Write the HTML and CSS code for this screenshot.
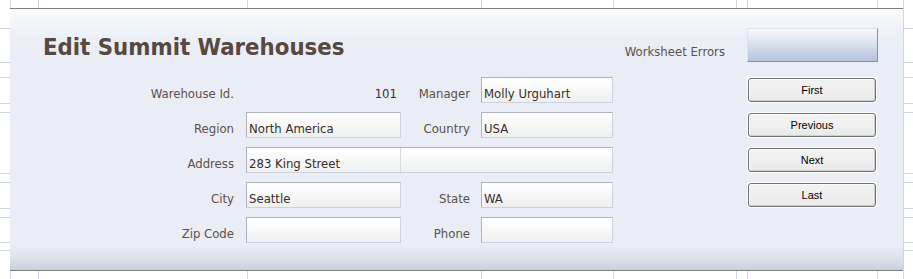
FILE: index.html
```html
<!DOCTYPE html>
<html lang="en">
<head>
<meta charset="utf-8">
<title>Edit Summit Warehouses</title>
<link rel="stylesheet" href="styles.css">
</head>
<body>
<div class="panel">
  <div class="header">
    <h1 class="title">Edit Summit Warehouses</h1>
    <span class="errors-label">Worksheet Errors</span>
    <div class="errors-box"></div>
  </div>
  <div class="form">
    <span class="label l1">Warehouse Id.</span>
    <span class="value-num">101</span>
    <span class="label l2">Manager</span>
    <div class="field">Molly Urguhart</div>
    <span class="gap"></span>
    <button class="btn"><span class="btn-face">First</span></button>

    <span class="label l1">Region</span>
    <div class="field">North America</div>
    <span class="label l2">Country</span>
    <div class="field">USA</div>
    <span class="gap"></span>
    <button class="btn"><span class="btn-face">Previous</span></button>

    <span class="label l1">Address</span>
    <div class="field field-wide"><span class="addr-a">283 King Street</span><span class="addr-b"></span></div>
    <span class="gap"></span>
    <button class="btn"><span class="btn-face">Next</span></button>

    <span class="label l1">City</span>
    <div class="field">Seattle</div>
    <span class="label l2">State</span>
    <div class="field">WA</div>
    <span class="gap"></span>
    <button class="btn"><span class="btn-face">Last</span></button>

    <span class="label l1">Zip Code</span>
    <div class="field"></div>
    <span class="label l2">Phone</span>
    <div class="field"></div>
  </div>
</div>
</body>
</html>
```
FILE: styles.css
```css
html, body {
  margin: 0;
  padding: 0;
}

body {
  width: 913px;
  height: 279px;
  overflow: hidden;
  background-color: #ffffff;
  background-repeat: no-repeat;
  background-image:
    linear-gradient(#cdd5e6, #cdd5e6), linear-gradient(#cdd5e6, #cdd5e6),
    linear-gradient(#cdd5e6, #cdd5e6), linear-gradient(#cdd5e6, #cdd5e6),
    linear-gradient(#cdd5e6, #cdd5e6), linear-gradient(#cdd5e6, #cdd5e6),
    linear-gradient(#cdd5e6, #cdd5e6), linear-gradient(#cdd5e6, #cdd5e6),
    linear-gradient(#cdd5e6, #cdd5e6),
    linear-gradient(#cdd5e6, #cdd5e6), linear-gradient(#cdd5e6, #cdd5e6),
    linear-gradient(#cdd5e6, #cdd5e6), linear-gradient(#cdd5e6, #cdd5e6),
    linear-gradient(#cdd5e6, #cdd5e6), linear-gradient(#cdd5e6, #cdd5e6),
    linear-gradient(#cdd5e6, #cdd5e6), linear-gradient(#cdd5e6, #cdd5e6),
    linear-gradient(#cdd5e6, #cdd5e6), linear-gradient(#cdd5e6, #cdd5e6),
    linear-gradient(#cdd5e6, #cdd5e6);
  background-size:
    1px 100%, 1px 100%, 1px 100%, 1px 100%, 1px 100%, 1px 100%, 1px 100%, 1px 100%, 1px 100%,
    100% 1px, 100% 1px, 100% 1px, 100% 1px, 100% 1px, 100% 1px, 100% 1px, 100% 1px, 100% 1px, 100% 1px, 100% 1px;
  background-position:
    10px 0, 38px 0, 247px 0, 481px 0, 613px 0, 736px 0, 747px 0, 877px 0, 903px 0,
    0 28px, 0 62px, 0 77px, 0 103px, 0 112px, 0 173px, 0 182px, 0 208px, 0 217px, 0 242px, 0 250px;
  font-family: "DejaVu Sans Condensed", "DejaVu Sans", sans-serif;
  font-stretch: condensed;
}

.panel {
  box-sizing: border-box;
  margin: 8px 0 0 10px;
  width: 893px;
  height: 263px;
  border-top: 1px solid #7d7d7d;
  border-bottom: 1px solid #7f7f7f;
  padding-top: 19px;
  background: linear-gradient(to bottom, #f9fafc 0, #edf0f6 26px, #eaedf5 40px, #eaedf5 236px, #dfe3ec 248px, #c9d0dd 100%);
}

/* header */
.header {
  display: flex;
  align-items: flex-start;
  height: 34px;
  margin-bottom: 15px;
  padding-right: 25px;
}

.title {
  flex: 1;
  margin: 0;
  padding: 5px 0 0 33px;
  font-size: 23.7px;
  line-height: 28px;
  font-weight: bold;
  color: #574840;
}

.errors-label {
  padding-top: 17px;
  margin-right: 22px;
  font-size: 13px;
  line-height: 14px;
  color: #5e504a;
}

.errors-box {
  box-sizing: border-box;
  width: 131px;
  height: 34px;
  border: 1px solid #dfe3eb;
  border-right-color: #8d939c;
  border-bottom-color: #8a9099;
  background: linear-gradient(to bottom, #f8f9fc 0%, #dbe2ee 45%, #b5c2da 100%);
}

/* form grid */
.form {
  display: grid;
  grid-template-columns: 236px 155px 80px 132px 134px 130px;
  grid-auto-rows: 26px;
  row-gap: 9px;
}

.label {
  display: block;
  box-sizing: border-box;
  padding-top: 10px;
  font-size: 13px;
  line-height: 14px;
  color: #5e4f48;
  text-align: right;
  white-space: nowrap;
}

.l1 { padding-right: 12px; }
.l2 { padding-right: 11px; }

.value-num {
  display: block;
  padding: 10px 4px 0 0;
  font-size: 13px;
  line-height: 14px;
  color: #3f3130;
  text-align: right;
}

.field {
  box-sizing: border-box;
  height: 26px;
  border: 1px solid #aeb3bd;
  border-right-color: #cdd1d9;
  border-bottom-color: #cdd1d9;
  background: linear-gradient(to bottom, #ffffff 0%, #f7f8f7 50%, #eef0ef 100%);
  padding: 9px 2px 0;
  font-size: 13px;
  line-height: 14px;
  color: #3a2c2b;
  white-space: nowrap;
  overflow: hidden;
}

.field-wide {
  grid-column: 2 / 5;
  display: flex;
  padding: 0;
}

.addr-a {
  box-sizing: border-box;
  width: 154px;
  height: 100%;
  padding: 9px 2px 0;
  border-right: 1px solid #d9dce2;
}

.addr-b {
  flex: 1;
}

.gap {
  display: block;
}

/* nav buttons */
.btn {
  display: block;
  box-sizing: border-box;
  width: 130px;
  height: 26px;
  margin: 0;
  padding: 1px;
  border: 0;
  background: #ffffff;
  font-family: "Liberation Sans", Arial, sans-serif;
  font-size: 11px;
  color: #000000;
}

.btn-face {
  display: flex;
  align-items: center;
  justify-content: center;
  box-sizing: border-box;
  width: 100%;
  height: 100%;
  border: 1px solid #707070;
  border-radius: 3px;
  background: linear-gradient(to bottom, #f2f2f2 0%, #efefef 60%, #e9e9e9 100%);
  box-shadow: inset 1px 1px 0 #fbfbfb, inset -1px -1px 0 #cfcfcf;
}
```
